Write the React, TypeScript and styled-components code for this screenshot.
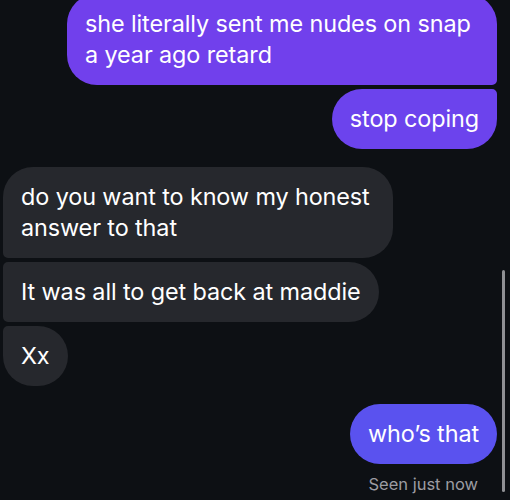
import React from "react";
import styled, { createGlobalStyle, css } from "styled-components";

const GlobalStyle = createGlobalStyle`
  html, body {
    margin: 0;
    padding: 0;
    background: #0d1014;
  }
  body {
    font-family: Inter, "Noto Sans", "Liberation Sans", sans-serif;
    -webkit-font-smoothing: antialiased;
  }
`;

type Side = "me" | "them";
type Pos = "first" | "middle" | "last" | "single";

type Message = {
  text: string;
  side: Side;
  pos: Pos;
  max?: number;
  tone?: string;
};

const groups: Message[][] = [
  [
    { text: "she literally sent me nudes on snap a year ago retard", side: "me", pos: "first", max: 430, tone: "#7140ec" },
    { text: "stop coping", side: "me", pos: "last", tone: "#6c43ed" },
  ],
  [
    { text: "do you want to know my honest answer to that", side: "them", pos: "first", max: 390 },
    { text: "It was all to get back at maddie", side: "them", pos: "middle" },
    { text: "Xx", side: "them", pos: "last" },
  ],
  [{ text: "who\u2019s that", side: "me", pos: "single", tone: "#5a52ef" }],
];

function App() {
  return (
    <>
      <GlobalStyle />
      <Screen>
        <Thread>
          {groups.map((group, gi) => (
            <Group key={gi} $side={group[0].side}>
              {group.map((m, i) => (
                <Bubble key={i} $side={m.side} $pos={m.pos} $max={m.max} $tone={m.tone}>
                  {m.text}
                </Bubble>
              ))}
            </Group>
          ))}
          <Seen>Seen just now</Seen>
        </Thread>
        <ScrollThumb />
      </Screen>
    </>
  );
}

export default App;

const Screen = styled.div`
  position: relative;
  width: 510px;
  height: 500px;
  overflow: hidden;
  background: #0d1014;
`;

const Thread = styled.div`
  display: flex;
  flex-direction: column;
  gap: 18px;
  padding: 0 13px 0 3px;
  margin-top: -6px;
`;

const Group = styled.div<{ $side: Side }>`
  display: flex;
  flex-direction: column;
  gap: 4px;
  align-items: ${(p) => (p.$side === "me" ? "flex-end" : "flex-start")};
`;

const big = 30;
const small = 5;

const radius = (side: Side, pos: Pos) => {
  const top = pos === "first" || pos === "single" ? big : small;
  const bottom = pos === "last" || pos === "single" ? big : small;
  if (side === "me") return css`border-radius: ${big}px ${top}px ${bottom}px ${big}px;`;
  return css`border-radius: ${top}px ${big}px ${big}px ${bottom}px;`;
};

const Bubble = styled.div<{ $side: Side; $pos: Pos; $max?: number; $tone?: string }>`
  box-sizing: border-box;
  max-width: ${(p) => (p.$max ? `${p.$max}px` : "440px")};
  padding: 14px 18px 15px;
  font-size: 23.4px;
  line-height: 31px;
  letter-spacing: -0.1px;
  color: #ffffff;
  background: ${(p) => (p.$side === "me" ? p.$tone ?? "#6c43ed" : "#26282d")};
  ${(p) => radius(p.$side, p.$pos)}
`;

const Seen = styled.div`
  align-self: flex-end;
  margin: -8px 19px 0 0;
  font-size: 16.5px;
  line-height: 20px;
  color: #9c9ca2;
`;

const ScrollThumb = styled.div`
  position: absolute;
  right: 5px;
  top: 270px;
  width: 3px;
  height: 222px;
  border-radius: 2px;
  background: #8f9094;
`;
